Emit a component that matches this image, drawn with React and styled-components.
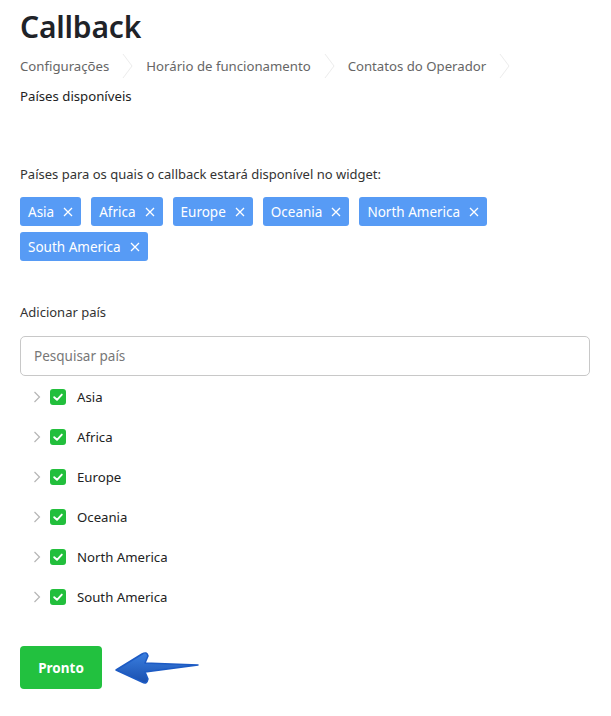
import React from "react";
import styled, { createGlobalStyle } from "styled-components";

const Global = createGlobalStyle`
  html, body { margin: 0; padding: 0; background: #fff; }
  body { font-family: "Noto Sans", "Open Sans", sans-serif; color: #222; }
  * { box-sizing: border-box; }
`;

const Page = styled.div`
  padding: 8px 21px 20px 20px;
  width: 611px;
`;

const Title = styled.h1`
  margin: 0;
  font-size: 30px;
  font-weight: 600;
  line-height: 38px;
  color: #1f2328;
  letter-spacing: -0.2px;
`;

const Crumbs = styled.nav`
  display: flex;
  flex-wrap: wrap;
  align-items: center;
  margin-top: 7px;
  row-gap: 4px;
  width: 520px;
`;

const Crumb = styled.span`
  display: inline-flex;
  align-items: center;
  font-size: 13.2px;
  line-height: 26px;
  color: ${(p) => (p.$active ? "#222" : "#666")};
`;

const Sep = styled.svg`
  width: 12px;
  height: 26px;
  margin: 0 12px 0 13px;
`;

const Label = styled.div`
  font-size: 13px;
  color: #333;
  line-height: 18px;
  margin-top: ${(p) => p.$mt || 0}px;
`;

const Tags = styled.div`
  display: flex;
  flex-wrap: wrap;
  gap: 6px 10px;
  margin-top: 14px;
`;

const Tag = styled.span`
  display: inline-flex;
  align-items: center;
  height: 29px;
  padding: 0 8px;
  gap: 9px;
  background: #579bf5;
  color: #fff;
  border-radius: 3px;
  font-size: 13.5px;
`;

const Search = styled.div`
  margin-top: 15px;
  height: 40px;
  border: 1px solid #c8c8c8;
  border-radius: 5px;
  display: flex;
  align-items: center;
  padding: 0 13px;
  font-size: 13.5px;
  color: #777;
`;

const Tree = styled.ul`
  list-style: none;
  margin: 1px 0 0;
  padding: 0;
`;

const Node = styled.li`
  display: flex;
  align-items: center;
  height: 40px;
  padding-left: 10px;
  font-size: 13.2px;
  color: #222;
`;

const Box = styled.span`
  width: 16px;
  height: 16px;
  border-radius: 3px;
  background: #22bf3c;
  display: inline-flex;
  align-items: center;
  justify-content: center;
  margin: 0 11px 0 6px;
`;

const Footer = styled.div`
  display: flex;
  align-items: center;
  gap: 12px;
  margin-top: 29px;
`;

const Button = styled.button`
  width: 82px;
  height: 43px;
  border: none;
  border-radius: 4px;
  background: #22c13f;
  color: #fff;
  font-family: inherit;
  font-weight: 700;
  font-size: 13.5px;
  cursor: pointer;
`;

const Chevron = ({ color = "#b5b5b5" }) => (
  <svg width="14" height="14" viewBox="0 0 14 14">
    <path d="M4.5 2 L9.5 7 L4.5 12" fill="none" stroke={color} strokeWidth="1.2" />
  </svg>
);

const X = () => (
  <svg width="10" height="10" viewBox="0 0 10 10">
    <path d="M1 1 L9 9 M9 1 L1 9" stroke="#fff" strokeWidth="1.3" />
  </svg>
);

const Check = () => (
  <svg width="12" height="12" viewBox="0 0 12 12">
    <path d="M2.2 6.2 L5 8.8 L9.8 3.6" fill="none" stroke="#fff" strokeWidth="1.9" strokeLinecap="round" strokeLinejoin="round" />
  </svg>
);

const Separator = () => (
  <Sep viewBox="0 0 12 26">
    <path d="M1 1 L10 13 L1 25" fill="none" stroke="#ececec" strokeWidth="1" />
  </Sep>
);

const Arrow = () => (
  <svg width="86" height="36" viewBox="0 0 86 36">
    <defs>
      <linearGradient id="ag" x1="0" y1="0" x2="0" y2="1">
        <stop offset="0" stopColor="#3a7fe0" />
        <stop offset="1" stopColor="#1a4fae" />
      </linearGradient>
    </defs>
    <path
      d="M2 20 L28 4 Q33 1 34 6 L31 13 L84 15 L31 22 L34 29 Q33 35 28 32 Z"
      fill="url(#ag)"
      stroke="#1d5bc4"
      strokeWidth="1.5"
      strokeLinejoin="round"
    />
  </svg>
);

const regions = ["Asia", "Africa", "Europe", "Oceania", "North America", "South America"];

export default function App() {
  return (
    <Page>
      <Global />
      <Title>Callback</Title>
      <Crumbs>
        <Crumb>Configurações</Crumb>
        <Separator />
        <Crumb>Horário de funcionamento</Crumb>
        <Separator />
        <Crumb>Contatos do Operador</Crumb>
        <Separator />
        <Crumb $active>Países disponíveis</Crumb>
      </Crumbs>
      <Label $mt={56}>Países para os quais o callback estará disponível no widget:</Label>
      <Tags>
        {regions.map((r) => (
          <Tag key={r}>
            {r}
            <X />
          </Tag>
        ))}
      </Tags>
      <Label $mt={42}>Adicionar país</Label>
      <Search>Pesquisar país</Search>
      <Tree>
        {regions.map((r) => (
          <Node key={r}>
            <Chevron />
            <Box>
              <Check />
            </Box>
            {r}
          </Node>
        ))}
      </Tree>
      <Footer>
        <Button>Pronto</Button>
        <Arrow />
      </Footer>
    </Page>
  );
}
